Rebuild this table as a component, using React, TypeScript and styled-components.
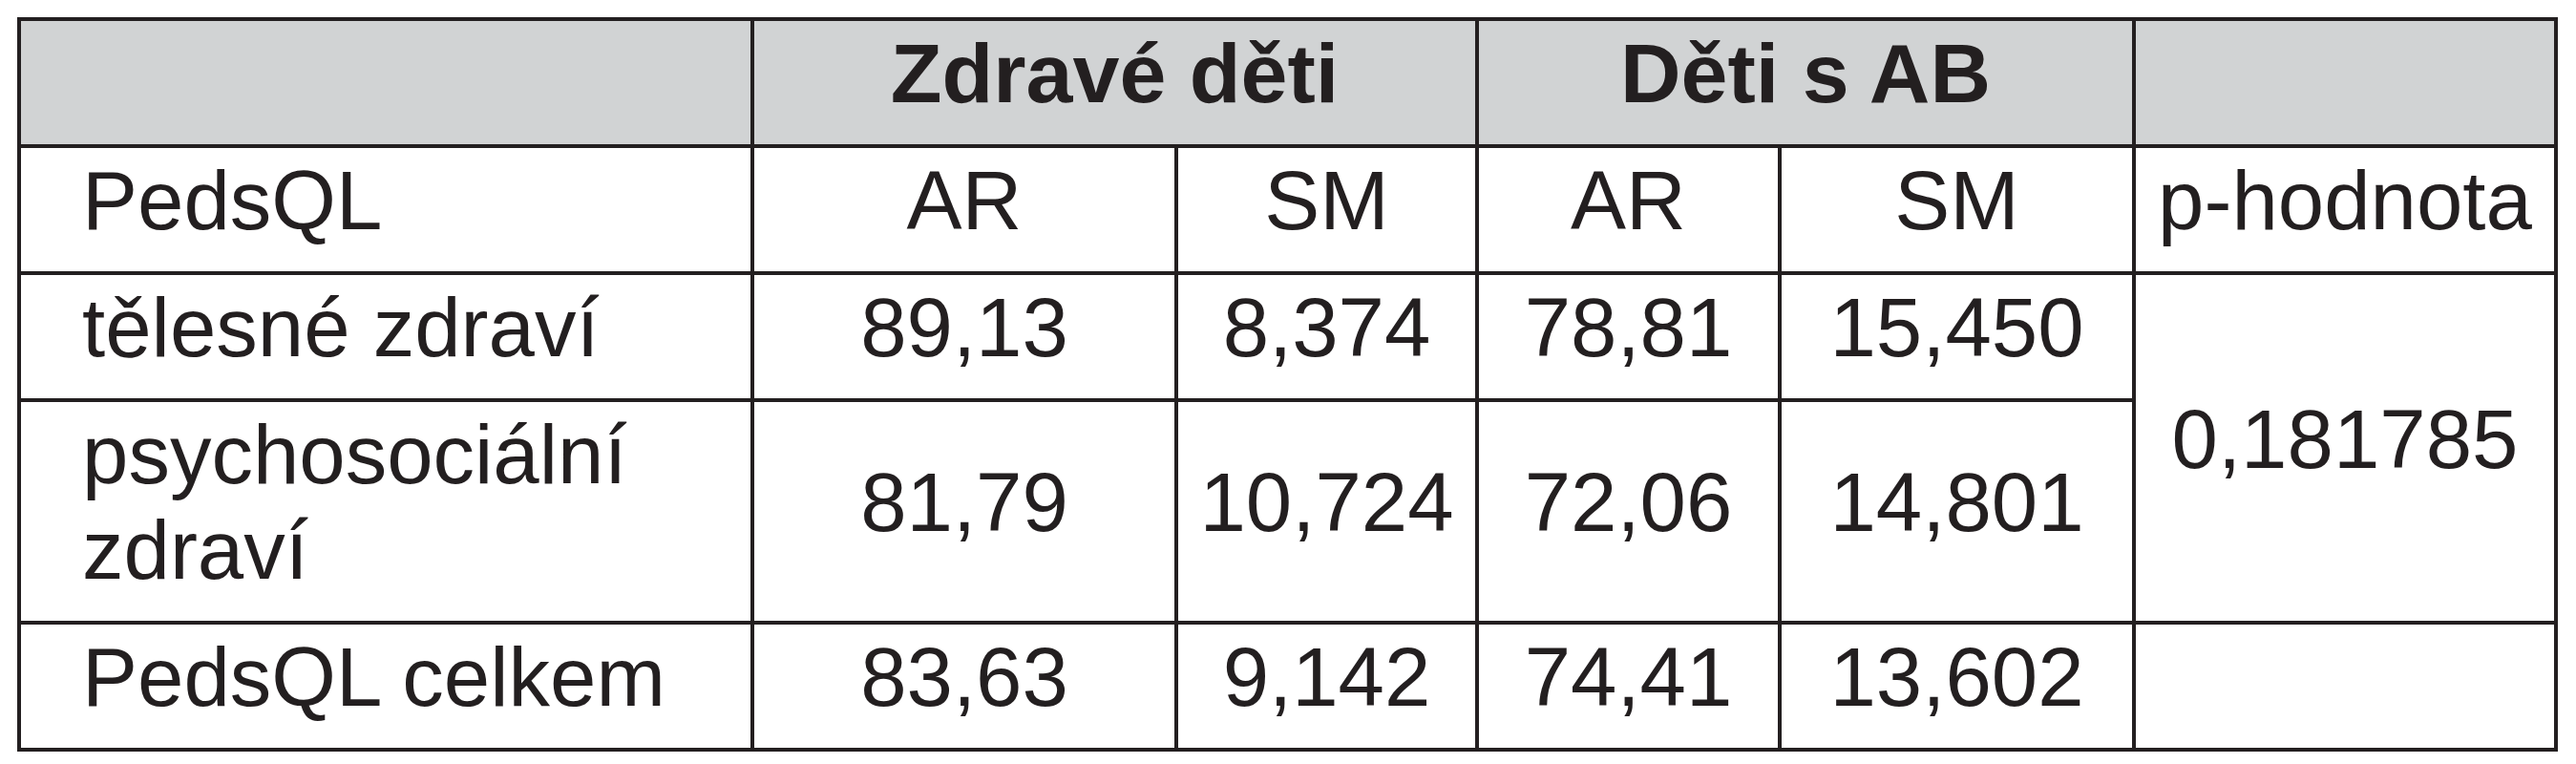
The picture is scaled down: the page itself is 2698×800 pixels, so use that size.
import * as React from "react";
import styled, { createGlobalStyle, css } from "styled-components";

const INK = "#231f20";
const HEAD_BG = "#d1d3d4";

const GlobalStyle = createGlobalStyle`
  html, body {
    margin: 0;
    padding: 0;
    background: #ffffff;
  }
  body {
    font-family: "Liberation Sans", Arial, sans-serif;
    color: ${INK};
  }
`;

const Page = styled.div`
  padding: 18px 0 0 18px;
`;

const Grid = styled.div`
  display: grid;
  grid-template-columns: 768px 444px 315px 317px 371px 442px;
  width: max-content;
  border-top: 4px solid ${INK};
  border-left: 4px solid ${INK};
`;

type CellProps = {
  $head?: boolean;
  $align?: "left" | "center";
  $span?: number;
  $rows?: number;
};

const Cell = styled.div<CellProps>`
  box-sizing: border-box;
  display: flex;
  align-items: center;
  justify-content: ${({ $align }) => ($align === "left" ? "flex-start" : "center")};
  padding: 5px 0 24px ${({ $align }) => ($align === "left" ? "64px" : "0")};
  border-right: 4px solid ${INK};
  border-bottom: 4px solid ${INK};
  background: ${({ $head }) => ($head ? HEAD_BG : "#ffffff")};
  font-size: 87px;
  line-height: 100px;
  white-space: pre-line;
  grid-column: span ${({ $span }) => $span ?? 1};
  grid-row: span ${({ $rows }) => $rows ?? 1};

  ${({ $head }) =>
    $head &&
    css`
      font-weight: bold;
      font-size: 88px;
    `}
`;

const Label = styled.span`
  display: block;
`;

type Row = {
  label: string;
  values: string[];
};

const ROWS: Row[] = [
  { label: "tělesné zdraví", values: ["89,13", "8,374", "78,81", "15,450"] },
  { label: "psychosociální\nzdraví", values: ["81,79", "10,724", "72,06", "14,801"] },
  { label: "PedsQL celkem", values: ["83,63", "9,142", "74,41", "13,602"] },
];

export default function App() {
  return (
    <>
      <GlobalStyle />
      <Page>
        <Grid>
          <Cell $head />
          <Cell $head $span={2}>Zdravé děti</Cell>
          <Cell $head $span={2}>Děti s AB</Cell>
          <Cell $head />

          <Cell $align="left">PedsQL</Cell>
          <Cell>AR</Cell>
          <Cell>SM</Cell>
          <Cell>AR</Cell>
          <Cell>SM</Cell>
          <Cell>p-hodnota</Cell>

          {ROWS.map((row, i) => (
            <React.Fragment key={row.label}>
              <Cell $align="left">
                <Label>{row.label}</Label>
              </Cell>
              {row.values.map((v, j) => (
                <Cell key={j}>{v}</Cell>
              ))}
              {i === 0 && <Cell $rows={2}>0,181785</Cell>}
              {i === 2 && <Cell />}
            </React.Fragment>
          ))}
        </Grid>
      </Page>
    </>
  );
}
